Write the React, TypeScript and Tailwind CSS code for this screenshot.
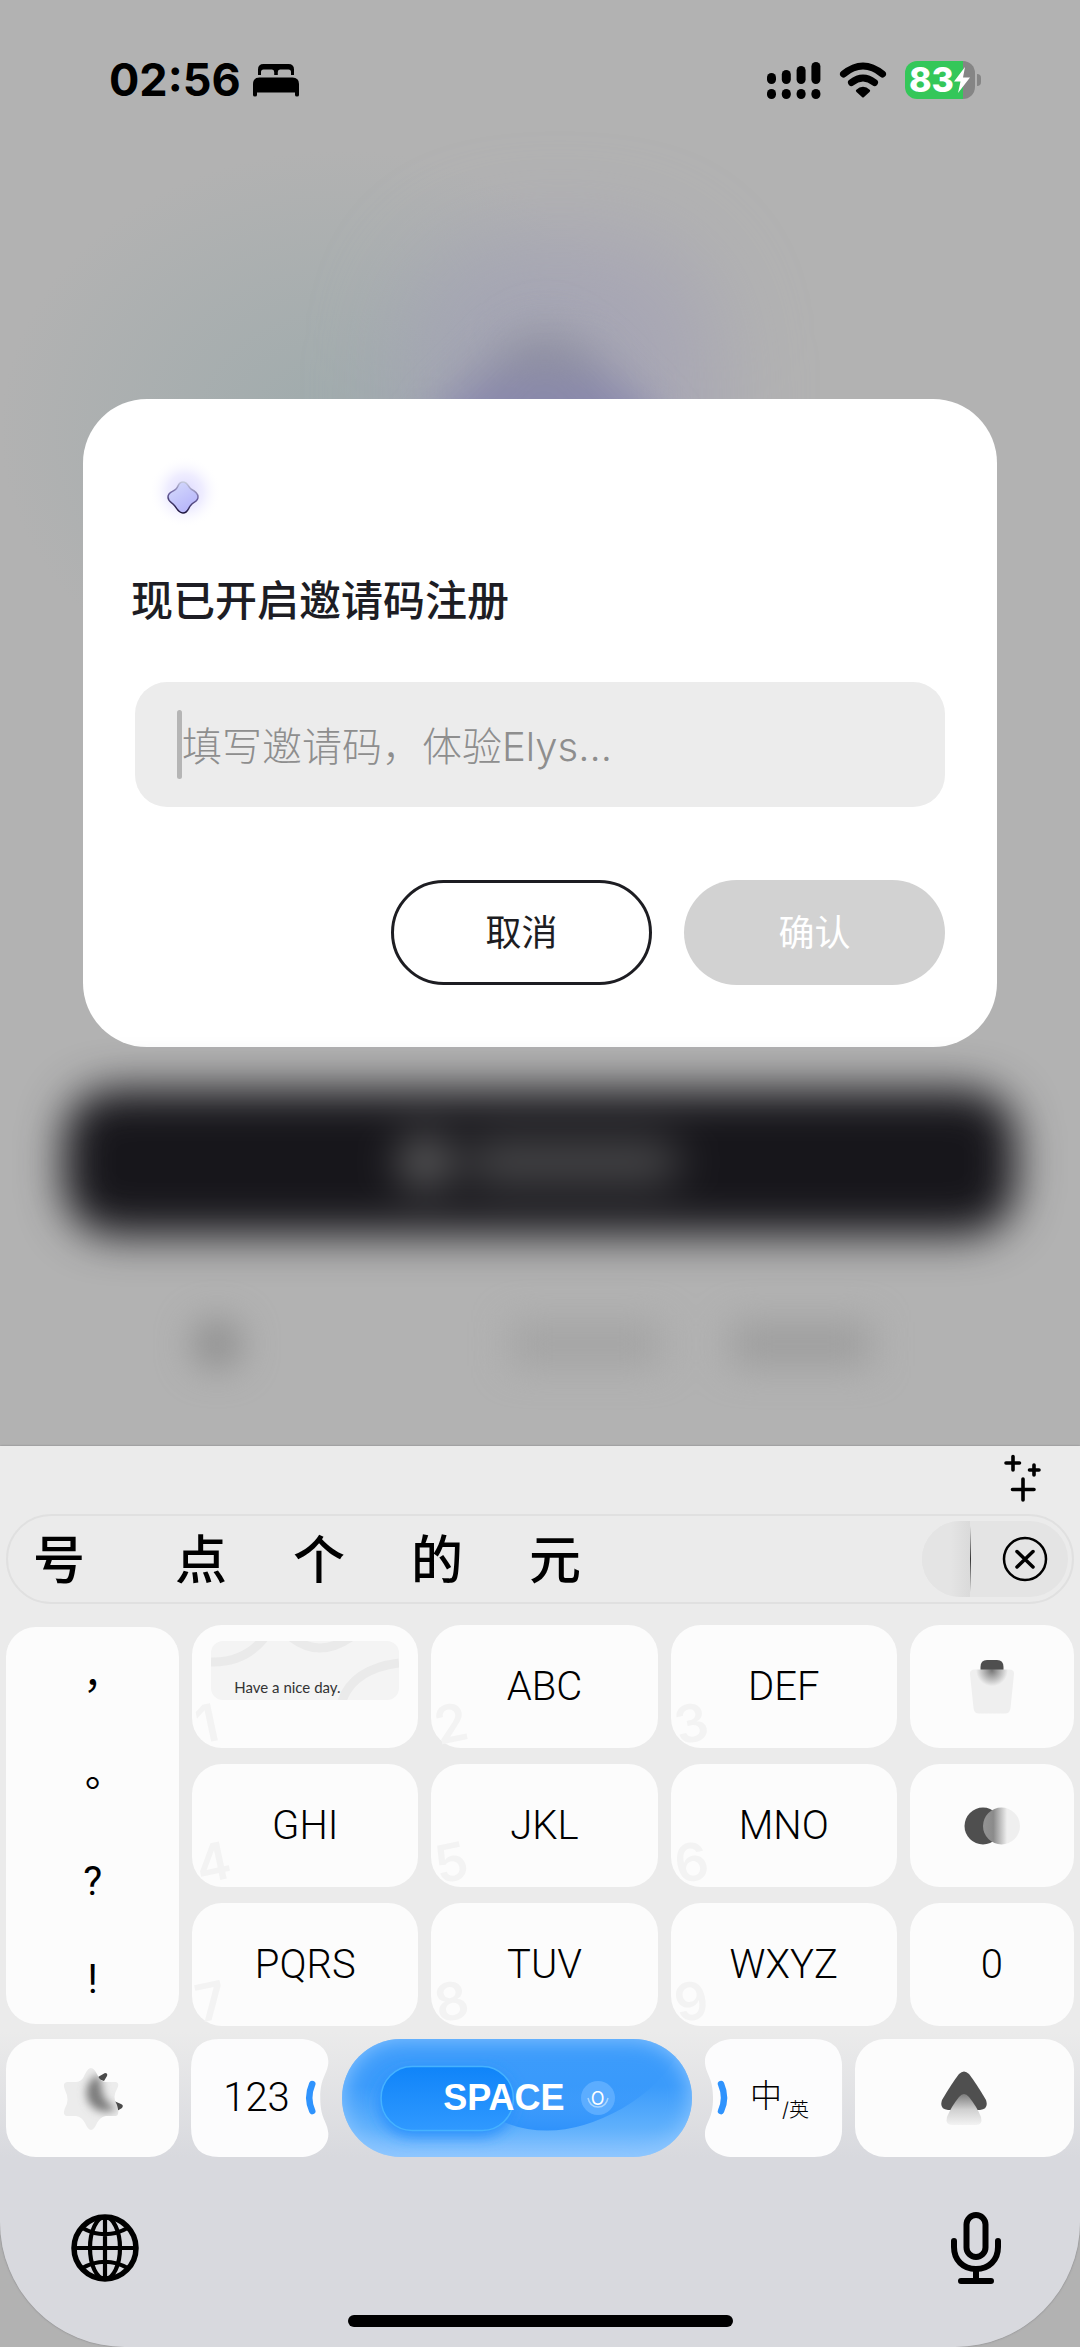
import { useState, type ReactNode } from "react"

const LETTER_KEYS = ["", "ABC", "DEF", "GHI", "JKL", "MNO", "PQRS", "TUV", "WXYZ"]
const CANDIDATES = ["点", "个", "的", "元"]
const SIGNAL = [11, 14, 18, 22]

function BedIcon() {
  return (
    <svg width="46" height="33" viewBox="0 0 46 33" aria-hidden="true">
      <path d="M5 11V5.500Q5 0 10.500 0H35.500Q41 0 41 5.500V11H38V8Q38 5.500 35.500 5.500H27Q24.800 5.500 24.800 8V11H21.200V8Q21.200 5.500 19 5.500H10.500Q8 5.500 8 8V11Z" />
      <path d="M0 20Q0 13.500 6.500 13.500H39.500Q46 13.500 46 20V31Q46 32.500 44 32.500T42 31V28.500H4V31Q4 32.500 2 32.500T0 31Z" />
    </svg>
  )
}

function SignalIcon() {
  return (
    <svg width="54" height="37" viewBox="0 0 54 37" aria-hidden="true">
      {SIGNAL.map((h, i) => (
        <g key={h}>
          <rect x={i * 14.8} y={22 - h} width="9" height={h} rx="4.500" />
          <rect x={i * 14.8} y="27" width="9" height="10" rx="4.500" />
        </g>
      ))}
    </svg>
  )
}

function WifiIcon() {
  return (
    <svg width="48" height="36" viewBox="0 0 48 36" aria-hidden="true">
      <g fill="none" stroke="#000" strokeWidth="7" strokeLinecap="round">
        <path d="M4.500 12Q24 -4 43.500 12" />
        <path d="M12.500 20.500Q24 11.500 35.500 20.500" />
      </g>
      <path d="M17 28Q24 21.500 31 28Q31.500 29 30.500 30L25 35Q24 36 23 35L17.500 30Q16.500 29 17 28Z" />
    </svg>
  )
}

function Battery() {
  return (
    <div className="flex items-center gap-[2px]">
      <div className="flex h-[38px] w-[70px] items-center rounded-[12px] bg-[linear-gradient(90deg,#34c759_83%,#858585_83%)] pl-[4px]">
        <span className="text-[34px] leading-[38px] font-extrabold text-white">83</span>
        <svg width="16" height="26" viewBox="0 0 16 26" fill="#fff" aria-hidden="true">
          <path d="M11 0L0 14.500H6.500L4 26L16 10.500H9Z" />
        </svg>
      </div>
      <span className="h-[12px] w-[4px] rounded-r-full bg-[#858585]" />
    </div>
  )
}

function Logo() {
  return (
    <svg width="104" height="104" viewBox="0 0 104 104" aria-hidden="true">
      <defs>
        <radialGradient id="glow">
          <stop offset="0" stopColor="#c3bcff" stopOpacity="0.6" />
          <stop offset="0.5" stopColor="#dcd8ff" stopOpacity="0.45" />
          <stop offset="1" stopColor="#fff" stopOpacity="0" />
        </radialGradient>
        <linearGradient id="gem" x1="0" y1="0" x2="0.6" y2="1">
          <stop offset="0" stopColor="#d6dcfb" />
          <stop offset="1" stopColor="#b7b5fb" />
        </linearGradient>
        <linearGradient id="rim" x1="0.6" y1="0" x2="0.4" y2="1">
          <stop offset="0" stopColor="#c9cddd" />
          <stop offset="0.45" stopColor="#6a5f9e" />
          <stop offset="1" stopColor="#1a1238" />
        </linearGradient>
      </defs>
      <circle cx="54" cy="47" r="36" fill="url(#glow)" />
      <path
        d="M52 37C57 37 57 42 60 44C64 46 67 48 67 52C67 57 62 57 60 60C57 63 57 68 52 68C47 68 46 63 43 60C41 57 37 57 37 52C37 47 42 47 45 44C48 41 47 37 52 37Z"
        fill="url(#gem)"
        stroke="url(#rim)"
        strokeWidth="1.500"
      />
    </svg>
  )
}

function SparkleIcon() {
  return (
    <svg width="38" height="48" viewBox="0 0 38 48" fill="none" stroke="#000" strokeWidth="3.600" strokeLinecap="round" aria-hidden="true">
      <path d="M10 2.500V16M3 9H16.500" />
      <path d="M31 11V21M26.500 16H36" />
      <path d="M20 25V46M9.500 35.500H31" />
    </svg>
  )
}

function CloseIcon() {
  return (
    <svg width="46" height="46" viewBox="0 0 46 46" fill="none" stroke="#000" strokeLinecap="round" aria-hidden="true">
      <circle cx="23" cy="23" r="21" strokeWidth="2.500" />
      <path d="M15 15.500L31 31M31 15.500L15 31" strokeWidth="3.500" />
    </svg>
  )
}

function DeleteIcon() {
  return (
    <svg width="46" height="56" viewBox="0 0 46 56" aria-hidden="true">
      <defs>
        <radialGradient id="bin" cx="0.5" cy="0.02" r="0.36">
          <stop offset="0" stopColor="#777" />
          <stop offset="1" stopColor="#efefef" />
        </radialGradient>
      </defs>
      <path d="M11.500 11V8Q11.500 1 18 1H28Q34.500 1 34.500 8V11Z" fill="#4f4f4f" />
      <path d="M6 10.500H40Q45.500 10.500 45 15L41.500 49Q41 54.500 36 54.500H10Q5 54.500 4.500 49L1 15Q0.500 10.500 6 10.500Z" fill="url(#bin)" />
    </svg>
  )
}

function ToggleIcon() {
  return (
    <svg width="58" height="38" viewBox="0 0 58 38" aria-hidden="true">
      <defs>
        <linearGradient id="lens" x1="0" x2="1">
          <stop offset="0" stopColor="#949494" />
          <stop offset="0.28" stopColor="#8b8b8b" />
          <stop offset="0.65" stopColor="#efefef" />
        </linearGradient>
      </defs>
      <circle cx="20" cy="19" r="18.500" fill="#4f4f4f" />
      <circle cx="38.500" cy="19" r="18.500" fill="url(#lens)" />
    </svg>
  )
}

function SunMoonIcon() {
  return (
    <svg width="66" height="66" viewBox="0 0 66 66" aria-hidden="true">
      <defs>
        <clipPath id="star">
          <path d="M31 3Q34 3 37 9Q40 17 46 17H56Q60 18 57 24Q52 32 57 40Q60 50 56 51H46Q40 52 37 58Q34 65 31 65Q28 65 25 58Q22 52 16 51H7Q2 50 5 43Q10 35 5 25Q2 18 7 17H16Q22 17 25 9Q28 3 31 3Z" />
        </clipPath>
        <filter id="soft" x="-30%" y="-30%" width="160%" height="160%">
          <feGaussianBlur stdDeviation="4" />
        </filter>
      </defs>
      <path d="M38 12L45 8Q48 8 47 11L44 16L38 14ZM54 36L61 39Q64 40 62 43L57 46L52 42Z" fill="#4a4a4a" />
      <g clipPath="url(#star)">
        <rect width="66" height="66" fill="#ececec" />
        <path d="M39 9Q22 18 28 36Q37 52 58 44Q44 38 42 26Q41 16 39 9Z" fill="#7c7c7c" filter="url(#soft)" />
      </g>
    </svg>
  )
}

function EnterIcon() {
  return (
    <svg width="48" height="56" viewBox="0 0 48 56" aria-hidden="true">
      <defs>
        <linearGradient id="fade" x1="0" y1="0" x2="0" y2="1">
          <stop offset="0" stopColor="#7c7c7c" />
          <stop offset="0.5" stopColor="#d0d0d0" />
          <stop offset="1" stopColor="#f3f3f3" />
        </linearGradient>
      </defs>
      <path d="M19 4Q24 -1 29 4Q36 13 46 30Q49 39 40 40H8Q-1 39 2 30Q12 13 19 4Z" fill="#4f4f4f" />
      <path d="M19 27Q24 21 29 27Q37 37 41 47Q43 55 36 55H12Q5 55 7 47Q11 37 19 27Z" fill="url(#fade)" />
    </svg>
  )
}

function GlobeIcon() {
  return (
    <svg width="68" height="68" viewBox="0 0 68 68" fill="none" stroke="#000" strokeWidth="4.200" aria-hidden="true">
      <circle cx="34" cy="34" r="31" strokeWidth="5.500" />
      <ellipse cx="34" cy="34" rx="15" ry="31" />
      <path d="M34 3V65M3 34H65M10.500 13.500Q34 27 57.500 13.500M10.500 54.500Q34 41 57.500 54.500" />
    </svg>
  )
}

function MicIcon() {
  return (
    <svg width="52" height="74" viewBox="0 0 52 74" fill="none" stroke="#000" strokeWidth="6" strokeLinecap="round" aria-hidden="true">
      <rect x="16.500" y="4" width="19" height="42" rx="9.500" />
      <path d="M4 30V36C4 49 13 58 26 58S48 49 48 36V30M26 58V70M11 70H41" />
    </svg>
  )
}

// White key whose inner edge curves in around the space bar
function NotchedKey({ label, mirrored, children }: { label: string; mirrored?: boolean; children: ReactNode }) {
  return (
    <button type="button" aria-label={label} className="relative h-full">
      <svg
        className={mirrored ? "absolute inset-0 h-full w-full -scale-x-100" : "absolute inset-0 h-full w-full"}
        viewBox="0 0 138 118"
        preserveAspectRatio="none"
        aria-hidden="true"
      >
        <path
          d="M28 0H109C124 0 138 10 137 24C136 36 129 38 129 59S136 82 137 94C138 108 124 118 109 118H28Q0 118 0 88V30Q0 0 28 0Z"
          fill="#fcfcfd"
        />
        <path d="M121 45Q115 59 121 72" fill="none" stroke="#2f93fd" strokeWidth="6.500" strokeLinecap="round" />
      </svg>
      <span className="relative">{children}</span>
    </button>
  )
}

function SpaceKey() {
  return (
    <button
      type="button"
      className="relative flex h-full items-center justify-center gap-4 rounded-full bg-[linear-gradient(180deg,#3b9bfb_40%,#5fb0fc_75%,#8cc5ff_100%)] shadow-[inset_0_0_22px_#8fc7ff]"
    >
      <svg className="absolute inset-0 h-full w-full" viewBox="0 0 350 116" preserveAspectRatio="none" aria-hidden="true">
        <defs>
          <linearGradient id="pill" x1="0" y1="0" x2="0" y2="1">
            <stop offset="0" stopColor="#0f84f9" />
            <stop offset="1" stopColor="#3099ff" />
          </linearGradient>
          <linearGradient id="wave" x1="0" y1="0" x2="0" y2="1">
            <stop offset="0" stopColor="#3b9bfb" stopOpacity="0" />
            <stop offset="1" stopColor="#2f92fb" />
          </linearGradient>
          <filter id="halo" x="-20%" y="-30%" width="140%" height="160%">
            <feGaussianBlur stdDeviation="7" />
          </filter>
        </defs>
        <path d="M150 14H336Q318 46 280 68Q240 90 205 90Q175 90 150 76Z" fill="url(#wave)" />
        <rect x="36" y="30" width="136" height="66" rx="33" fill="#2a90fc" filter="url(#halo)" />
        <rect x="39" y="27" width="132" height="63" rx="31" fill="url(#pill)" stroke="#45b2ff" strokeWidth="1.500" />
      </svg>
      <span className="relative pl-6 font-['Liberation_Sans',sans-serif] text-[36px] font-bold text-white">SPACE</span>
      <span className="relative flex size-[34px] items-center justify-center rounded-full bg-[#5cadff] text-[18px] text-white">
        O
        <svg className="absolute inset-0" width="34" height="34" viewBox="0 0 34 34" fill="none" stroke="#a9d5ff" strokeWidth="1.500" aria-hidden="true">
          <path d="M7 17Q9 26 17 26T27 17" />
        </svg>
      </span>
    </button>
  )
}

function GreetingCard() {
  return (
    <span className="relative mx-auto mt-4 flex h-[59px] w-[188px] items-end rounded-[12px] bg-[#f4f4f4]">
      <svg className="absolute inset-0 rounded-[12px]" width="188" height="59" viewBox="0 0 188 59" fill="none" stroke="#eaeaea" strokeWidth="9" aria-hidden="true">
        <path d="M0 21Q34 22 54 -4M80 -4Q108 18 140 -4M188 22Q142 28 131 60" />
      </svg>
      <span className="relative pl-[23px] pb-[3px] font-['Lato',sans-serif] text-[15px] leading-[20px] text-[#333]">Have a nice day.</span>
    </span>
  )
}

function LetterKey({ digit, letters }: { digit: number; letters: string }) {
  return (
    <button type="button" className="relative flex items-center justify-center rounded-[30px] bg-[#fcfcfc]">
      {letters ? (
        <span className="font-['Roboto',sans-serif] text-[40px] font-light">{letters}</span>
      ) : (
        <span className="flex h-full w-full">
          <GreetingCard />
        </span>
      )}
      <span className="absolute -bottom-2 left-1 -rotate-12 text-[52px] leading-[64px] font-semibold text-[#f3f3f3]">{digit}</span>
    </button>
  )
}

function IconKey({ label, children }: { label: string; children: ReactNode }) {
  return (
    <button type="button" aria-label={label} className="flex items-center justify-center rounded-[30px] bg-[#fcfcfc]">
      {children}
    </button>
  )
}

function StatusBar() {
  return (
    <header className="relative flex h-[160px] items-center justify-between pr-[99px] pl-[109px]">
      <div className="flex items-center gap-3">
        <span className="text-[45px] font-bold">02:56</span>
        <BedIcon />
      </div>
      <div className="flex items-center gap-[18px]">
        <SignalIcon />
        <WifiIcon />
        <Battery />
      </div>
    </header>
  )
}

function InviteDialog() {
  const [code, setCode] = useState("")

  return (
    <form
      role="dialog"
      aria-labelledby="invite-title"
      className="relative mx-[83px] mt-[239px] rounded-[64px] bg-white px-12 pt-[46px] pb-[62px]"
      onSubmit={(e) => e.preventDefault()}
    >
      <Logo />
      <h1 id="invite-title" className="mt-[22px] text-[42px] leading-[60px] font-medium text-[#1d1d24]">
        现已开启邀请码注册
      </h1>
      <div className="mx-1 mt-[51px] flex h-[125px] items-center rounded-[32px] bg-[#ececec] px-[42px]">
        <span className="h-[69px] w-[5px] shrink-0 rounded-full bg-[#b5b5b5]" />
        <input
          aria-labelledby="invite-title"
          value={code}
          onChange={(e) => setCode(e.target.value)}
          placeholder="填写邀请码，体验Elys..."
          className="w-full min-w-0 bg-transparent pt-1 text-[40px] font-light text-[#1d1d24] outline-none placeholder:text-[#8e8e8e]"
        />
      </div>
      <div className="mx-1 mt-[73px] flex justify-end gap-8 text-[36px]">
        <button type="button" className="h-[105px] w-[261px] rounded-full border-3 border-[#1d1d22] text-[#1d1d22]">
          取消
        </button>
        <button type="submit" className="h-[105px] w-[261px] rounded-full bg-[#d2d2d2] text-white">
          确认
        </button>
      </div>
    </form>
  )
}

function Keyboard() {
  return (
    <section aria-label="键盘" className="relative rounded-b-[125px] bg-[linear-gradient(180deg,#ebebeb_65%,#d8d9de_79%)] shadow-[0_0_2px_#77777c]">
      <div className="flex h-[68px] items-center justify-end pr-[39px] pb-1">
        <button type="button" aria-label="工具">
          <SparkleIcon />
        </button>
      </div>

      {/* Candidates */}
      <div className="mx-[6px] flex h-[90px] items-center justify-between rounded-full border-2 border-[#e0e0e0] pr-1 pl-[25px] text-[52px] font-medium">
        <div className="flex gap-[66px] pt-1">
          <button type="button" className="mr-6">号</button>
          {CANDIDATES.map((c) => (
            <button type="button" key={c}>{c}</button>
          ))}
        </div>
        <div className="flex h-[76px] w-[146px] items-center rounded-full bg-[#e4e4e4]">
          <span className="h-full w-[48px] rounded-l-full bg-[linear-gradient(90deg,#e4e4e4_60%,#dadada)]" />
          <span className="h-[66px] w-px bg-[linear-gradient(180deg,#e4e4e4,#333_50%,#e4e4e4)]" />
          <button type="button" aria-label="清除" className="ml-[31px]">
            <CloseIcon />
          </button>
        </div>
      </div>

      {/* Letters */}
      <div className="mx-[6px] mt-[21px] grid grid-cols-[173fr_226fr_226fr_226fr_164fr] grid-rows-[123px_123px_123px] gap-x-[13px] gap-y-4">
        <div className="row-span-3 my-[2px] flex flex-col items-center justify-between rounded-[30px] bg-[#fcfcfc] pt-[30px] pb-[14px] font-['Roboto','Noto_Sans_CJK_TC',sans-serif] text-[40px] leading-[60px]">
          <button type="button">，</button>
          <button type="button">。</button>
          <button type="button">?</button>
          <button type="button">!</button>
        </div>
        {LETTER_KEYS.slice(0, 3).map((k, i) => (
          <LetterKey key={i} digit={i + 1} letters={k} />
        ))}
        <IconKey label="删除">
          <DeleteIcon />
        </IconKey>
        {LETTER_KEYS.slice(3, 6).map((k, i) => (
          <LetterKey key={i} digit={i + 4} letters={k} />
        ))}
        <IconKey label="切换">
          <ToggleIcon />
        </IconKey>
        {LETTER_KEYS.slice(6).map((k, i) => (
          <LetterKey key={i} digit={i + 7} letters={k} />
        ))}
        <button type="button" className="rounded-[30px] bg-[#fcfcfc] font-['Roboto',sans-serif] text-[40px] font-light">
          0
        </button>
      </div>

      {/* Bottom row */}
      <div className="mx-[6px] mt-[13px] grid h-[118px] grid-cols-[173fr_138fr_350fr_138fr_219fr] gap-3">
        <IconKey label="表情">
          <SunMoonIcon />
        </IconKey>
        <NotchedKey label="123">
          <span className="pr-2 font-['Roboto',sans-serif] text-[40px] font-light">123</span>
        </NotchedKey>
        <SpaceKey />
        <NotchedKey label="中/英" mirrored>
          <span className="flex items-center justify-center pl-3 font-light">
            <span className="pb-1 text-[32px] leading-[40px]">中</span>
            <span className="pt-6 text-[20px] leading-[24px]">/英</span>
          </span>
        </NotchedKey>
        <IconKey label="确定">
          <EnterIcon />
        </IconKey>
      </div>

      <div className="flex h-[158px] items-center justify-between pt-6 pr-[78px] pl-[71px]">
        <button type="button" aria-label="切换输入法">
          <GlobeIcon />
        </button>
        <button type="button" aria-label="语音输入">
          <MicIcon />
        </button>
      </div>
      <div className="mx-auto mb-5 h-3 w-[385px] rounded-full bg-black" />
    </section>
  )
}

export default function App() {
  return (
    <div className="relative flex min-h-screen flex-col overflow-hidden bg-[#b2b2b2] font-['Inter','Noto_Sans_CJK_SC',sans-serif] text-black">
      {/* Soft colour behind the dialog */}
      <div className="absolute top-[150px] left-0 h-[560px] w-[680px] bg-[radial-gradient(closest-side,#9aa9ab,transparent)] opacity-80" />
      <div className="absolute top-[230px] left-[400px] h-[460px] w-[320px] rounded-[120px] bg-[#a19fb6] opacity-60 blur-[45px]" />
      <div className="absolute top-[350px] left-[445px] size-[200px] rotate-45 rounded-[60px] bg-[linear-gradient(135deg,#8f90a0_15%,#8684b3_45%)] blur-[22px]" />

      <StatusBar />
      <InviteDialog />

      <div className="relative mt-[42px] flex flex-1 flex-col" aria-hidden="true">
        <div className="mx-[64px] flex h-[146px] items-center justify-center gap-4 rounded-[50px] bg-[#17161b] blur-[22px]">
          <span className="size-[50px] rounded-full bg-[#6c6c6c]" />
          <span className="h-[44px] w-[214px] rounded-full bg-[#49494b]" />
        </div>
        <div className="mt-[85px] flex items-center justify-center gap-[70px] pr-4 blur-[18px]">
          <span className="mr-[200px] size-[48px] rounded-full bg-[#8c8c8c]" />
          <span className="h-[44px] w-[150px] bg-[#a4a4a4]" />
          <span className="h-[44px] w-[140px] bg-[#9e9e9e]" />
        </div>
      </div>

      <Keyboard />
    </div>
  )
}
